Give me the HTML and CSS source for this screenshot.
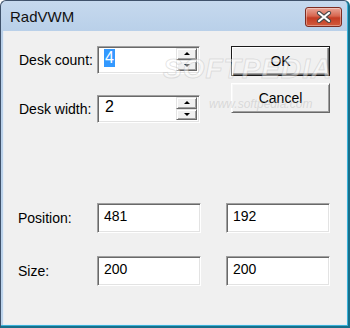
FILE: index.html
```html
<!DOCTYPE html>
<html lang="en">
<head>
  <meta charset="UTF-8" />
  <title>RadVWM</title>
  <link rel="stylesheet" href="styles.css">
</head>
<body>

<div class="window">
  <div class="titlebar">
    <span class="title">RadVWM</span>
    <button class="close-btn">
      <svg width="16" height="12" viewBox="0 0 16 12">
        <path d="M3 2 L13 10 M13 2 L3 10" stroke="#4a4a4a" stroke-width="4.2" stroke-linecap="round" fill="none"/>
        <path d="M3 2 L13 10 M13 2 L3 10" stroke="#ffffff" stroke-width="2.2" stroke-linecap="round" fill="none"/>
      </svg>
    </button>
  </div>

  <div class="client">
    <div class="top">
      <div class="fields">
        <label class="lbl">Desk count:</label>
        <div class="spin">
          <div class="spin-value"><span class="selected">4</span></div>
          <div class="spin-arrows">
            <span class="arrow-btn"><i class="arrow up"></i></span>
            <span class="arrow-btn"><i class="arrow down"></i></span>
          </div>
        </div>
        <label class="lbl">Desk width:</label>
        <div class="spin">
          <div class="spin-value"><span class="plain">2</span></div>
          <div class="spin-arrows">
            <span class="arrow-btn"><i class="arrow up"></i></span>
            <span class="arrow-btn"><i class="arrow down"></i></span>
          </div>
        </div>
      </div>
      <div class="buttons">
        <button class="btn btn-default">OK</button>
        <button class="btn">Cancel</button>
      </div>
    </div>

    <div class="geometry">
      <span class="lbl">Position:</span>
      <div class="edit">481</div>
      <div class="edit">192</div>
      <span class="lbl">Size:</span>
      <div class="edit">200</div>
      <div class="edit">200</div>
    </div>

    <div class="watermark">
      <div class="wm-big">SOFTPEDIA</div>
      <div class="wm-small">www.softpedia.com</div>
    </div>
  </div>
</div>

</body>
</html>
```

FILE: styles.css
```css
body { margin: 0; background: #ffffff; font-family: "Liberation Sans", Arial, sans-serif; }

.window {
  width: 350px; height: 328px; box-sizing: border-box;
  display: flex; flex-direction: column;
  border: 1px solid #3f526b; border-right: 2px solid #176f8a; border-bottom: 2px solid #176f8a;
  border-radius: 6px 6px 0 0;
  padding: 0 1px 1px 2px;
  background: linear-gradient(#c6d9ee, #b9d0e9 30px, #bcd3eb);
  box-shadow: inset -1px -1px 0 #3ab2d8;
}

.titlebar { height: 30px; display: flex; align-items: flex-start; justify-content: space-between; padding-left: 7px; }
.title { font-size: 15px; color: #111; margin-top: 7px; }
.close-btn {
  width: 37px; height: 20px; margin: 6px 5px 0 0; padding: 0;
  display: flex; align-items: center; justify-content: center;
  border: 1px solid #7d2c22; border-radius: 3px;
  background: linear-gradient(#e9a597, #d7664f 45%, #c43c24 55%, #d25a3c);
  box-shadow: inset 0 0 0 1px rgba(255,255,255,0.35);
}

.client {
  flex: 1; position: relative;
  background: #f0f0f0;
  border: 1px solid #e6edf5; border-top: none;
}

.top { display: flex; padding: 15px 0 0 15px; }
.fields { display: grid; grid-template-columns: 78px 103px; grid-auto-rows: 28px; row-gap: 21px; align-items: center; }
.lbl { font-size: 14px; color: #000; }

.spin {
  height: 28px; box-sizing: border-box; display: flex;
  background: #fff;
  border: 1px solid; border-color: #a0a0a0 #fff #fff #a0a0a0;
  box-shadow: inset 1px 1px 0 #696969, inset -1px -1px 0 #e3e3e3;
  padding: 1px 2px 2px 1px;
}
.spin-value { flex: 1; padding: 1px 0 0 5px; font-size: 16px; }
.spin-value span { display: inline-block; line-height: 18px; padding: 0 1px; }
.selected { background: #3399ff; color: #fff; }
.spin-arrows { width: 21px; display: flex; flex-direction: column; }
.arrow-btn {
  flex: 1; display: flex; align-items: center; justify-content: center;
  background: #f0f0f0;
  border: 1px solid; border-color: #e3e3e3 #696969 #696969 #e3e3e3;
  box-shadow: inset 1px 1px 0 #fff, inset -1px -1px 0 #a0a0a0;
}
.arrow { width: 0; height: 0; border-left: 3px solid transparent; border-right: 3px solid transparent; }
.arrow.up { border-bottom: 3px solid #000; }
.arrow.down { border-top: 3px solid #000; }

.buttons { display: flex; flex-direction: column; gap: 7px; margin-left: 31px; }
.btn {
  width: 99px; height: 30px; box-sizing: border-box;
  font-family: "Liberation Sans", Arial, sans-serif; font-size: 14px; color: #000;
  background: #f0f0f0;
  border: 1px solid; border-color: #fff #696969 #696969 #fff;
  box-shadow: inset 1px 1px 0 #f7f7f7, inset -1px -1px 0 #a0a0a0;
}
.btn-default {
  border: 1px solid #1a1a1a;
  box-shadow: inset 1px 1px 0 #fff, inset -1px -1px 0 #696969, inset -2px -2px 0 #a0a0a0;
}

.geometry {
  display: grid; grid-template-columns: 54px 104px 104px; grid-auto-rows: 30px;
  column-gap: 25px; row-gap: 23px; align-items: center;
  padding-left: 14px; margin-top: 80px;
}
.edit {
  height: 30px; box-sizing: border-box;
  background: #fff; font-size: 14px; line-height: 16px;
  border: 1px solid; border-color: #a0a0a0 #fff #fff #a0a0a0;
  box-shadow: inset 1px 1px 0 #696969, inset -1px -1px 0 #e3e3e3;
  padding: 4px 0 0 6px;
}

.watermark { position: absolute; left: 159px; top: 24px; pointer-events: none; }
.wm-big {
  font-size: 28px; line-height: 28px; font-weight: bold; font-style: italic; letter-spacing: 1px;
  color: rgba(255,255,255,0.45);
  -webkit-text-stroke: 1px rgba(150,150,150,0.25);
}
.wm-small {
  margin: 14px 0 0 46px; font-size: 12px; font-style: italic;
  color: rgba(170,170,170,0.35);
}
```
